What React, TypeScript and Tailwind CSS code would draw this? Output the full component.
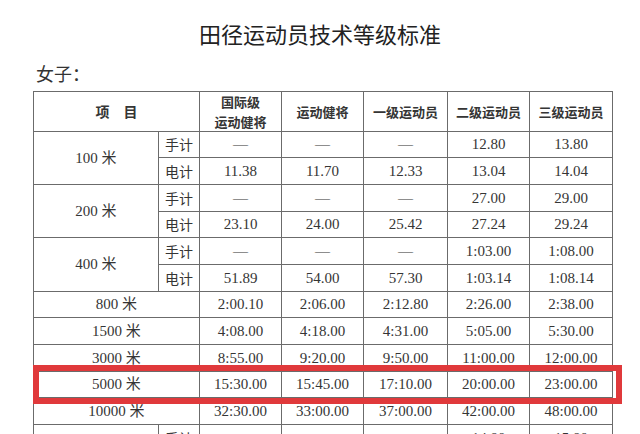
import React from "react";

const serif = { fontFamily: '"Liberation Serif", "Noto Sans CJK SC", serif' };

type Split = { label: string; hand: string[]; elec: string[] };
type Single = { label: string; vals: string[] };

const splits: Split[] = [
  { label: "100 米", hand: ["—", "—", "—", "12.80", "13.80"], elec: ["11.38", "11.70", "12.33", "13.04", "14.04"] },
  { label: "200 米", hand: ["—", "—", "—", "27.00", "29.00"], elec: ["23.10", "24.00", "25.42", "27.24", "29.24"] },
  { label: "400 米", hand: ["—", "—", "—", "1:03.00", "1:08.00"], elec: ["51.89", "54.00", "57.30", "1:03.14", "1:08.14"] },
];

const singles: Single[] = [
  { label: "800 米", vals: ["2:00.10", "2:06.00", "2:12.80", "2:26.00", "2:38.00"] },
  { label: "1500 米", vals: ["4:08.00", "4:18.00", "4:31.00", "5:05.00", "5:30.00"] },
  { label: "3000 米", vals: ["8:55.00", "9:20.00", "9:50.00", "11:00.00", "12:00.00"] },
  { label: "5000 米", vals: ["15:30.00", "15:45.00", "17:10.00", "20:00.00", "23:00.00"] },
  { label: "10000 米", vals: ["32:30.00", "33:00.00", "37:00.00", "42:00.00", "48:00.00"] },
];

const heads = [
  ["国际级", "运动健将"],
  ["运动健将"],
  ["一级运动员"],
  ["二级运动员"],
  ["三级运动员"],
];

const cell = "border-r border-b border-[#6b6b6b] flex items-center justify-center text-[#353535]";

function Row({ h, children }: { h: string; children: React.ReactNode }) {
  return <div className={`flex ${h}`}>{children}</div>;
}

const widths = ["w-[82px]", "w-[82px]", "w-[84px]", "w-[82px]", "w-[83px]"];

function Vals({ vals }: { vals: string[] }) {
  return (
    <>
      {vals.map((v, i) => (
        <div key={i} className={`${cell} ${widths[i]} h-full text-[15px]`} style={serif}>
          {v}
        </div>
      ))}
    </>
  );
}

export default function App() {
  const splitHeights = [
    ["h-[26px]", "h-[27px]"],
    ["h-[27px]", "h-[26px]"],
    ["h-[27px]", "h-[27px]"],
  ];
  const singleHeights = ["h-[26px]", "h-[27px]", "h-[27px]", "h-[26px]", "h-[27px]"];
  return (
    <div className="relative w-[640px] h-[434px] overflow-hidden bg-white" style={{ fontFamily: '"Noto Sans CJK SC", sans-serif' }}>
      <div className="h-[46px] pt-[20px] text-center text-[22px] leading-[26px] text-[#222] pl-[-2px]">
        田径运动员技术等级标准
      </div>
      <div className="h-[45px] pt-[15px] pl-[36px] text-[18px] leading-[24px] text-[#333]" style={{ fontFamily: '"Noto Sans CJK SC", serif' }}>
        女子：
      </div>
      <div className="ml-[33px] w-[580px] border-t border-l border-[#6b6b6b]">
        <div className="flex h-[40px]">
          <div className={`${cell} w-[166px] h-full text-[14px] font-semibold`}>项　目</div>
          {heads.map((lines, i) => (
            <div key={i} className={`${cell} ${widths[i]} h-full flex-col text-[13px] font-semibold leading-[20px]`}>
              {lines.map((l) => (
                <span key={l}>{l}</span>
              ))}
            </div>
          ))}
        </div>
        {splits.map((s, si) => (
          <div key={s.label} className="flex">
            <div className={`${cell} w-[125px] text-[15px]`} style={serif}>
              {s.label}
            </div>
            <div className="flex flex-col">
              <Row h={splitHeights[si][0]}>
                <div className={`${cell} w-[41px] h-full text-[14px]`}>手计</div>
                <Vals vals={s.hand} />
              </Row>
              <Row h={splitHeights[si][1]}>
                <div className={`${cell} w-[41px] h-full text-[14px]`}>电计</div>
                <Vals vals={s.elec} />
              </Row>
            </div>
          </div>
        ))}
        {singles.map((s, i) => (
          <Row key={s.label} h={singleHeights[i]}>
            <div className={`${cell} w-[166px] h-full text-[15px]`} style={serif}>
              {s.label}
            </div>
            <Vals vals={s.vals} />
          </Row>
        ))}
        <div className="flex">
          <div className={`${cell} w-[125px] text-[15px]`} style={serif}>
            100 米栏
          </div>
          <div className="flex flex-col">
            <Row h="h-[27px]">
              <div className={`${cell} w-[41px] h-full text-[14px]`}>手计</div>
              <Vals vals={["—", "—", "—", "14.80", "15.80"]} />
            </Row>
            <Row h="h-[27px]">
              <div className={`${cell} w-[41px] h-full text-[14px]`}>电计</div>
              <Vals vals={["13.20", "13.70", "14.30", "15.04", "16.04"]} />
            </Row>
          </div>
        </div>
      </div>
      <div className="absolute left-[33px] top-[365px] w-[589px] h-[39px] border-[6px] border-[#e0393b]" />
    </div>
  );
}
